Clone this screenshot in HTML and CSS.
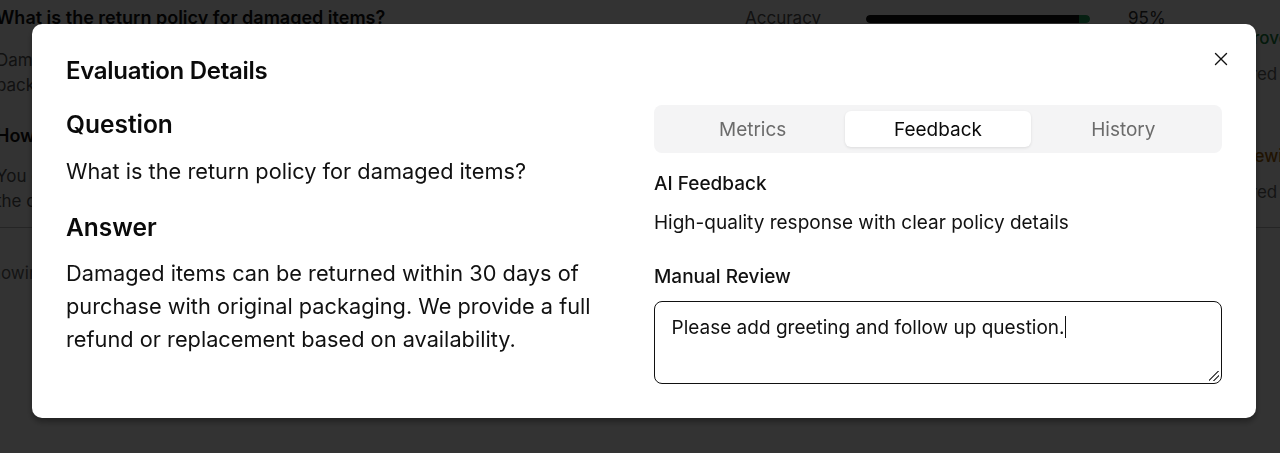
FILE: index.html
```html
<!DOCTYPE html>
<html>
<head>
<meta charset="utf-8">
<link rel="stylesheet" href="styles.css">
</head>
<body>
<div class="page">
  <div class="row">
    <div class="cell-main">
      <div class="q">What is the return policy for damaged items?</div>
      <div class="a first">Damaged items can be returned within 30 days of purchase with original</div>
      <div class="a">packaging. We provide a full refund or replacement.</div>
    </div>
    <div class="cell-metric">
      <span class="m-label">Accuracy</span>
      <span class="bar"><span class="bar-fill" style="width:100%"></span></span>
      <span class="m-val">95%</span>
    </div>
    <div class="cell-status">
      <div class="st green">Approved</div>
      <div class="st-sub">Scored</div>
    </div>
  </div>
  <div class="row row2">
    <div class="cell-main">
      <div class="q">How do I track my order status?</div>
      <div class="a first">You can track your order using the tracking link in</div>
      <div class="a">the confirmation email.</div>
    </div>
    <div class="cell-metric"></div>
    <div class="cell-status">
      <div class="st amber">Reviewing</div>
      <div class="st-sub">Scored</div>
    </div>
  </div>
  <div class="row3">Showing 2 of 2 results</div>
</div>

<div class="overlay">
  <div class="modal">
    <div class="modal-head">
      <h2 class="modal-title">Evaluation Details</h2>
      <button class="close" aria-label="Close">
        <svg width="14" height="14" viewBox="0 0 14 14"><path d="M1.5 1.5 L12.5 12.5 M12.5 1.5 L1.5 12.5" stroke="#111" stroke-width="1.4" stroke-linecap="round"/></svg>
      </button>
    </div>
    <div class="modal-body">
      <div class="col-left">
        <h3 class="sec-title">Question</h3>
        <p class="sec-text">What is the return policy for damaged items?</p>
        <h3 class="sec-title answer-title">Answer</h3>
        <p class="sec-text answer-text">Damaged items can be returned within 30 days of purchase with original packaging. We provide a full refund or replacement based on availability.</p>
      </div>
      <div class="col-right">
        <div class="tabs">
          <div class="tab">Metrics</div>
          <div class="tab active">Feedback</div>
          <div class="tab">History</div>
        </div>
        <div class="fb-label">AI Feedback</div>
        <div class="fb-text">High-quality response with clear policy details</div>
        <div class="fb-label mr-label">Manual Review</div>
        <div class="textarea">Please add greeting and follow up question.<span class="caret"></span><span class="grip"></span></div>
      </div>
    </div>
  </div>
</div>
</body>
</html>
```

FILE: styles.css
```css
* { box-sizing: border-box; }
html, body { margin: 0; padding: 0; }
body {
  width: 1280px;
  height: 453px;
  overflow: hidden;
  background: #ffffff;
  font-family: Inter, "Noto Sans", sans-serif;
  color: #111;
}

/* background page */
.page {
  padding: 6px 0 0 0;
  margin-left: -4px;
  white-space: nowrap;
}
.row {
  display: flex;
  height: 118px;
}
.row > div { flex-shrink: 0; }
.row2 {
  height: 104px;
  border-bottom: 1px solid #bbb;
}
.cell-main { width: 749px; }
.q { font-size: 18px; font-weight: 600; line-height: 24px; }
.a { font-size: 17px; color: #555; line-height: 25px; }
.a.first { margin-top: 18px; }
.row2 .a.first { margin-top: 16px; }
.cell-metric {
  width: 475px;
  display: flex;
  align-items: flex-start;
  font-size: 17px;
  color: #555;
}
.m-label { width: 121px; line-height: 24px; }
.bar {
  margin-top: 9px;
  width: 224px;
  height: 8px;
  border-radius: 4px;
  background: #e5e5e5;
  overflow: hidden;
  display: block;
}
.bar-fill { display: block; height: 100%; background: linear-gradient(90deg, #111 95%, #22a05a 95%); border-radius: 4px; }
.m-val { margin-left: 38px; line-height: 24px; color: #333; }
.cell-status { padding-top: 20px; font-size: 17px; }
.st { line-height: 24px; font-weight: 500; }
.green { color: #15803d; }
.amber { color: #a16207; }
.st-sub { margin-top: 12px; color: #666; line-height: 24px; }
.row3 { padding-top: 35px; font-size: 17px; color: #666; margin-left: -16px; }

/* overlay & modal */
.overlay {
  position: fixed;
  inset: 0;
  background: rgba(0, 0, 0, 0.8);
  padding: 24px 24px 0 32px;
}
.modal {
  width: 1224px;
  height: 394px;
  background: #fff;
  border-radius: 10px;
  box-shadow: 0 4px 6px rgba(0,0,0,0.35);
  padding: 32px 34px 32px 34px;
  display: flex;
  flex-direction: column;
}
.modal-head {
  display: flex;
  justify-content: space-between;
  align-items: flex-start;
  height: 36px;
}
.modal-title {
  margin: 0;
  font-size: 24px;
  font-weight: 600;
  line-height: 30px;
  letter-spacing: -0.3px;
  color: #0a0a0a;
}
.close {
  border: 0;
  background: none;
  padding: 0;
  margin: -4px -6px 0 0;
  width: 14px;
  height: 14px;
  display: flex;
  cursor: pointer;
}
.modal-body {
  display: grid;
  grid-template-columns: 568px 568px;
  column-gap: 20px;
  margin-top: 13px;
}
.sec-title {
  margin: 0;
  font-size: 24.5px;
  font-weight: 600;
  line-height: 38px;
  color: #0a0a0a;
}
.sec-text {
  margin: 12px 0 0 0;
  font-size: 21.75px;
  line-height: 33px;
  color: #111;
}
.answer-title { margin-top: 20px; }
.answer-text { margin-top: 11px; }

.tabs {
  height: 48px;
  background: #f4f4f5;
  border-radius: 8px;
  padding: 6px;
  display: grid;
  grid-template-columns: 1fr 1fr 1fr;
}
.tab {
  display: flex;
  align-items: center;
  justify-content: center;
  font-size: 19px;
  color: #6b6b6b;
  border-radius: 6px;
}
.tab.active {
  background: #fff;
  color: #0a0a0a;
  box-shadow: 0 1px 3px rgba(0,0,0,0.1);
}
.fb-label {
  margin-top: 19px;
  font-size: 19px;
  font-weight: 500;
  line-height: 24px;
  color: #111;
}
.fb-text {
  margin-top: 15px;
  font-size: 19px;
  line-height: 24px;
  color: #111;
}
.mr-label { margin-top: 30px; }
.textarea {
  position: relative;
  margin-top: 12px;
  height: 83px;
  border: 1.5px solid #111;
  border-radius: 8px;
  padding: 13px 16.5px;
  font-size: 19px;
  line-height: 26px;
  color: #111;
}
.caret {
  display: inline-block;
  width: 1px;
  height: 22px;
  background: #111;
  vertical-align: -4px;
}
.grip {
  position: absolute;
  right: 2px;
  bottom: 2px;
  width: 10px;
  height: 10px;
  background: linear-gradient(135deg, transparent 45%, #555 45%, #555 52%, transparent 52%, transparent 70%, #555 70%, #555 77%, transparent 77%);
}
```
